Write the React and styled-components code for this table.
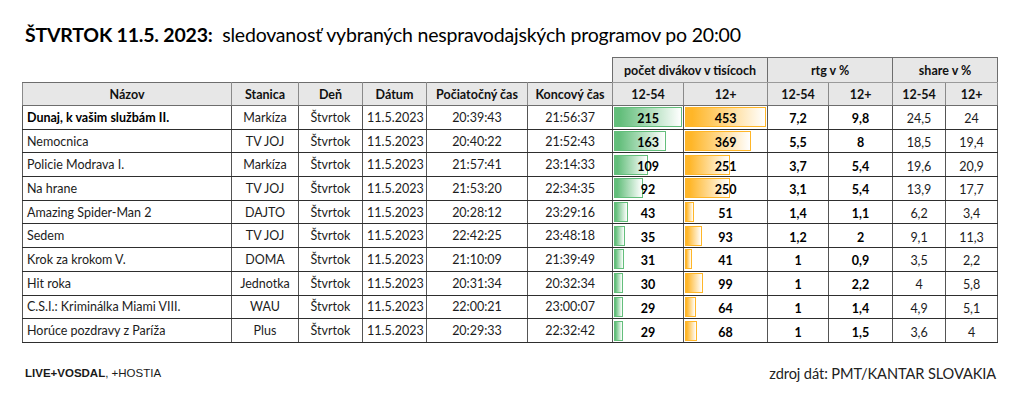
import React from 'react';
import styled, { createGlobalStyle } from 'styled-components';

const GlobalStyle = createGlobalStyle`
  html, body {
    margin: 0;
    padding: 0;
    background: #ffffff;
  }
  body {
    font-family: Lato, "Open Sans", "Liberation Sans", sans-serif;
    color: #111;
  }
`;

const rows = [
  { name: 'Dunaj, k vašim službám II.', station: 'Markíza', start: '20:39:43', end: '21:56:37', v1: 215, v2: 453, r1: '7,2', r2: '9,8', s1: '24,5', s2: '24', bold: true },
  { name: 'Nemocnica', station: 'TV JOJ', start: '20:40:22', end: '21:52:43', v1: 163, v2: 369, r1: '5,5', r2: '8', s1: '18,5', s2: '19,4' },
  { name: 'Policie Modrava I.', station: 'Markíza', start: '21:57:41', end: '23:14:33', v1: 109, v2: 251, r1: '3,7', r2: '5,4', s1: '19,6', s2: '20,9' },
  { name: 'Na hrane', station: 'TV JOJ', start: '21:53:20', end: '22:34:35', v1: 92, v2: 250, r1: '3,1', r2: '5,4', s1: '13,9', s2: '17,7' },
  { name: 'Amazing Spider-Man 2', station: 'DAJTO', start: '20:28:12', end: '23:29:16', v1: 43, v2: 51, r1: '1,4', r2: '1,1', s1: '6,2', s2: '3,4' },
  { name: 'Sedem', station: 'TV JOJ', start: '22:42:25', end: '23:48:18', v1: 35, v2: 93, r1: '1,2', r2: '2', s1: '9,1', s2: '11,3' },
  { name: 'Krok za krokom V.', station: 'DOMA', start: '21:10:09', end: '21:39:49', v1: 31, v2: 41, r1: '1', r2: '0,9', s1: '3,5', s2: '2,2' },
  { name: 'Hit roka', station: 'Jednotka', start: '20:31:34', end: '20:32:34', v1: 30, v2: 99, r1: '1', r2: '2,2', s1: '4', s2: '5,8' },
  { name: 'C.S.I.: Kriminálka Miami VIII.', station: 'WAU', start: '22:00:21', end: '23:00:07', v1: 29, v2: 64, r1: '1', r2: '1,4', s1: '4,9', s2: '5,1' },
  { name: 'Horúce pozdravy z Paríža', station: 'Plus', start: '20:29:33', end: '22:32:42', v1: 29, v2: 68, r1: '1', r2: '1,5', s1: '3,6', s2: '4' },
];

const colWidths = [209, 67, 64, 64, 101, 85, 71, 84, 61, 64, 53, 52];
const maxV1 = 215;
const maxV2 = 453;

const Page = styled.div`
  width: 1024px;
  height: 409px;
  display: flex;
  flex-direction: column;
  overflow: hidden;
`;

const Title = styled.h1`
  margin: 23px 0 0 25px;
  font-size: 19.5px;
  line-height: 24px;
  font-weight: 400;
  color: #000;
  letter-spacing: -0.2px;

  b {
    font-weight: 700;
  }
`;

const Table = styled.table`
  margin: 10px 0 0 22px;
  border-collapse: collapse;
  table-layout: fixed;
  width: 976px;
  font-size: 12.5px;
  color: #111;
`;

const GroupCell = styled.th`
  height: 24px;
  padding: 0;
  font-weight: 700;
  font-size: 12.5px;
  background: ${p => (p.$blank ? 'transparent' : '#e7e7e7')};
  border: ${p => (p.$blank ? 'none' : '1px solid #6d6d6d')};
  border-bottom: ${p => (p.$blank ? 'none' : '1px solid #9a9a9a')};
  text-align: center;
  vertical-align: middle;
`;

const HeadCell = styled.th`
  height: 22px;
  padding: 0;
  font-weight: 700;
  font-size: 12.5px;
  background: #e7e7e7;
  border: 1px solid #6d6d6d;
  border-left-color: #8a8a8a;
  border-right-color: #8a8a8a;
  text-align: center;
  vertical-align: middle;
`;

const Row = styled.tr`
  height: 23.7px;
`;

const Cell = styled.td`
  padding: ${p => (p.$low ? '3px 4px 0' : '0 4px')};
  border: 1px solid #2e2e2e;
  border-left-color: #555;
  border-right-color: #555;
  text-align: ${p => (p.$left ? 'left' : 'center')};
  font-weight: ${p => (p.$bold ? 700 : 400)};
  white-space: nowrap;
  overflow: hidden;
  vertical-align: middle;
  color: ${p => (p.$bold ? '#000' : '#1c1c1c')};
`;

const BarCell = styled.td`
  padding: 0;
  border: 1px solid #2e2e2e;
  border-left-color: #555;
  border-right-color: #555;
  vertical-align: middle;
`;

const BarBox = styled.div`
  position: relative;
  height: 22px;
  display: flex;
  align-items: center;
  justify-content: center;
  padding-top: 3px;
  box-sizing: border-box;
  font-weight: 700;
  color: #000;
`;

const Bar = styled.div`
  position: absolute;
  left: 1px;
  top: 1px;
  bottom: 1px;
  box-sizing: border-box;
  border: 1px solid ${p => p.$color};
  background: linear-gradient(90deg, ${p => p.$color} 0%, ${p => p.$color} 8%, #ffffff 100%);
`;

const BarValue = styled.span`
  position: relative;
`;

const Footer = styled.div`
  display: flex;
  justify-content: space-between;
  align-items: center;
  margin: 22px 28px 0 25px;
`;

const Note = styled.div`
  font-family: "Liberation Sans", Arial, sans-serif;
  font-size: 11.5px;
  color: #1a1a1a;

  b {
    font-weight: 700;
  }
`;

const Source = styled.div`
  font-size: 14.6px;
  color: #222;
  letter-spacing: -0.1px;
`;

function ViewerBar({ value, max, color, full }) {
  const width = Math.round((value / max) * full);
  return (
    <BarCell>
      <BarBox>
        <Bar $color={color} style={{ width: `${width}px` }} />
        <BarValue>{value}</BarValue>
      </BarBox>
    </BarCell>
  );
}

export default function App() {
  return (
    <Page>
      <GlobalStyle />
      <Title>
        <b>ŠTVRTOK 11.5. 2023:</b>&nbsp; sledovanosť vybraných nespravodajských programov po 20:00
      </Title>
      <Table>
        <colgroup>
          {colWidths.map((w, i) => (
            <col key={i} style={{ width: `${w}px` }} />
          ))}
        </colgroup>
        <thead>
          <tr>
            <GroupCell $blank colSpan={6} />
            <GroupCell colSpan={2}>počet divákov v tisícoch</GroupCell>
            <GroupCell colSpan={2}>rtg v %</GroupCell>
            <GroupCell colSpan={2}>share v %</GroupCell>
          </tr>
          <tr>
            <HeadCell>Názov</HeadCell>
            <HeadCell>Stanica</HeadCell>
            <HeadCell>Deň</HeadCell>
            <HeadCell>Dátum</HeadCell>
            <HeadCell>Počiatočný čas</HeadCell>
            <HeadCell>Koncový čas</HeadCell>
            <HeadCell>12-54</HeadCell>
            <HeadCell>12+</HeadCell>
            <HeadCell>12-54</HeadCell>
            <HeadCell>12+</HeadCell>
            <HeadCell>12-54</HeadCell>
            <HeadCell>12+</HeadCell>
          </tr>
        </thead>
        <tbody>
          {rows.map(r => (
            <Row key={r.name}>
              <Cell $left $bold={r.bold}>{r.name}</Cell>
              <Cell>{r.station}</Cell>
              <Cell>Štvrtok</Cell>
              <Cell>11.5.2023</Cell>
              <Cell>{r.start}</Cell>
              <Cell>{r.end}</Cell>
              <ViewerBar value={r.v1} max={maxV1} color="#63be7b" full={68} />
              <ViewerBar value={r.v2} max={maxV2} color="#ffb628" full={81} />
              <Cell $bold $low>{r.r1}</Cell>
              <Cell $bold $low>{r.r2}</Cell>
              <Cell $low>{r.s1}</Cell>
              <Cell $low>{r.s2}</Cell>
            </Row>
          ))}
        </tbody>
      </Table>
      <Footer>
        <Note>
          <b>LIVE+VOSDAL</b>, +HOSTIA
        </Note>
        <Source>zdroj dát: PMT/KANTAR SLOVAKIA</Source>
      </Footer>
    </Page>
  );
}
